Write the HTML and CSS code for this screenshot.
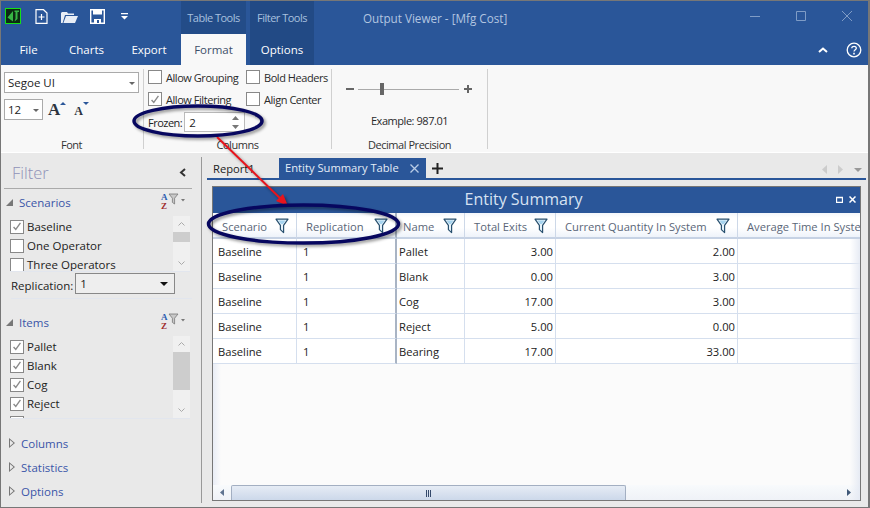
FILE: index.html
```html
<!DOCTYPE html>
<html lang="en">
<head>
    <meta charset="UTF-8">
    <title>Output Viewer - [Mfg Cost]</title>
    <link rel="stylesheet" href="styles.css">
</head>
<body>
    <svg class="defs" width="0" height="0">
        <symbol id="funnel" viewBox="0 0 14 16">
            <path d="M1 1.200h12L8.600 7.400v7.200L5.400 11.600V7.400z" fill="#e6f3fb" stroke="#28506f" stroke-width="1.200" stroke-linejoin="round"/>
            <path d="M3.500 2.500h7L8 6H6z" fill="#a6d3ee"/>
        </symbol>
        <symbol id="sortfilter" viewBox="0 0 24 16">
            <path d="M8 2h9l-3.400 4.200V12l-2.200-1.600V6.200z" fill="#c9c9c9" stroke="#777" stroke-width=".8"/>
            <path d="M20 7h4l-2 2.400z" fill="#777"/>
        </symbol>
        <symbol id="tick" viewBox="0 0 14 14">
            <path d="M3 7.500l2.600 3L11 2.800" fill="none" stroke="#8a8a8a" stroke-width="1.600"/>
        </symbol>
    </svg>

    <div class="window">
        <div class="titlebar">
            <div class="title-row">
                <div class="qat">
                    <svg class="logo" width="16" height="16" viewBox="0 0 16 16">
                        <rect x=".5" y=".5" width="15" height="15" fill="#0c2a12" stroke="#16e016"/>
                        <path d="M2.500 9.500L8 3v10.500zM9.500 2.500h4.500v1.500h-1.500v7L9.500 13.500l1-3V4h-1z" fill="#37b544"/>
                    </svg>
                    <svg class="qat-icon" width="13" height="15" viewBox="0 0 13 15">
                        <path d="M1 .7h7.500L12 4v10.300H1z" fill="none" stroke="#fff" stroke-width="1.200"/>
                        <path d="M6.500 5v6M3.500 8h6" stroke="#fff" stroke-width="1.200"/>
                    </svg>
                    <svg class="qat-icon open" width="17" height="13" viewBox="0 0 17 13">
                        <path d="M0 13V3l1-1h5l1 1.500h6V5H4L1.600 13z" fill="#e8eef6"/>
                        <path d="M2.400 13L5 6h12l-3 7z" fill="#e8eef6"/>
                    </svg>
                    <svg class="qat-icon save" width="15" height="15" viewBox="0 0 15 15">
                        <path d="M.7.700h13.600v13.600H.7z" fill="none" stroke="#fff" stroke-width="1.400"/>
                        <path d="M3 1h9v4.500H3zM4 10h7v5H4z" fill="#fff"/>
                        <path d="M7 11h2v3H7z" fill="#2a5699"/>
                    </svg>
                    <svg class="qat-icon more" width="7" height="7" viewBox="0 0 7 7">
                        <path d="M0 0h7v1.200H0zM0 3h7L3.500 6.500z" fill="#fff"/>
                    </svg>
                </div>
                <div class="context table-tools">Table Tools</div>
                <div class="context filter-tools">Filter Tools</div>
                <div class="window-title">Output Viewer - [Mfg Cost]</div>
                <div class="window-controls">
                    <svg width="10" height="10" viewBox="0 0 10 10"><path d="M0 5.500h10" stroke="#7f9cc6"/></svg>
                    <svg width="10" height="10" viewBox="0 0 10 10"><path d="M.5.500h9v9h-9z" fill="none" stroke="#7f9cc6"/></svg>
                    <svg width="10" height="10" viewBox="0 0 10 10"><path d="M0 0l10 10M10 0L0 10" stroke="#7f9cc6"/></svg>
                </div>
            </div>
            <div class="tab-row">
                <div class="tab tab-file">File</div>
                <div class="tab tab-charts">Charts</div>
                <div class="tab tab-export">Export</div>
                <div class="tab tab-format">Format</div>
                <div class="tab tab-options">Options</div>
                <div class="tab-right">
                    <svg width="10" height="6" viewBox="0 0 10 6"><path d="M1 5l4-3.500L9 5" fill="none" stroke="#fff" stroke-width="2"/></svg>
                    <svg width="16" height="16" viewBox="0 0 16 16">
                        <circle cx="8" cy="8" r="6.800" fill="none" stroke="#fff" stroke-width="1.300"/>
                        <path d="M5.800 6.200C5.800 3.600 10.300 3.700 10.300 6.200 10.300 7.700 8 7.800 8 9.600" fill="none" stroke="#fff" stroke-width="1.300"/>
                        <path d="M7.200 10.800h1.600v1.600H7.200z" fill="#fff"/>
                    </svg>
                </div>
            </div>
        </div>

        <div class="ribbon">
            <div class="group group-font">
                <div class="group-body">
                    <div class="combo combo-font">Segoe UI<i class="caret"></i></div>
                    <div class="font-size-row">
                        <div class="combo combo-size">12<i class="caret"></i></div>
                        <span class="grow-a">A</span><i class="up"></i>
                        <span class="shrink-a">A</span><i class="down"></i>
                    </div>
                </div>
                <div class="group-label">Font</div>
            </div>
            <div class="group group-columns">
                <div class="group-body">
                    <div class="check-grid">
                        <label class="check"><i class="box"></i>Allow Grouping</label>
                        <label class="check"><i class="box"></i>Bold Headers</label>
                        <label class="check"><i class="box"><svg width="13" height="13"><use href="#tick"/></svg></i>Allow Filtering</label>
                        <label class="check"><i class="box"></i>Align Center</label>
                    </div>
                    <div class="frozen-row">
                        <span>Frozen:</span>
                        <div class="spin">2
                            <svg width="7" height="13" viewBox="0 0 7 13"><path d="M0 4l3.500-4L7 4zM0 9h7l-3.500 4z" fill="#777"/></svg>
                        </div>
                    </div>
                </div>
                <div class="group-label">Columns</div>
            </div>
            <div class="group group-decimal">
                <div class="group-body">
                    <div class="slider">
                        <i class="minus"></i>
                        <div class="track"><i class="thumb"></i></div>
                        <svg width="8" height="8" viewBox="0 0 8 8"><path d="M0 3h8v2H0zM3 0h2v8H3z" fill="#666"/></svg>
                    </div>
                    <div class="example">Example: 987.01</div>
                </div>
                <div class="group-label">Decimal Precision</div>
            </div>
        </div>

        <div class="workspace">
            <aside class="sidebar">
                <div class="filter-head">
                    <span class="filter-title">Filter</span>
                    <svg width="7" height="9" viewBox="0 0 7 9"><path d="M6 1L2 4.500 6 8" fill="none" stroke="#333" stroke-width="2"/></svg>
                </div>

                <div class="section-head">
                    <i class="tri-open"></i><span>Scenarios</span>
                    <div class="sort-icon"><b>A</b><b class="z">Z</b><svg width="24" height="16"><use href="#sortfilter"/></svg></div>
                </div>
                <div class="list list-scenarios">
                    <div class="list-items">
                        <label class="item"><i class="box"><svg width="13" height="13"><use href="#tick"/></svg></i>Baseline</label>
                        <label class="item"><i class="box"></i>One Operator</label>
                        <label class="item"><i class="box"></i>Three Operators</label>
                    </div>
                    <div class="vscroll">
                        <svg width="7" height="4" viewBox="0 0 7 4"><path d="M.5 3.500L3.500.5l3 3" fill="none" stroke="#aaa"/></svg>
                        <i class="vthumb"></i>
                        <svg class="vdown" width="7" height="4" viewBox="0 0 7 4"><path d="M.5.500l3 3 3-3" fill="none" stroke="#aaa"/></svg>
                    </div>
                </div>
                <div class="replication">
                    <span>Replication:</span>
                    <div class="rep-select">1<i class="rep-caret"></i></div>
                </div>

                <div class="section-head section-items">
                    <i class="tri-open"></i><span>Items</span>
                    <div class="sort-icon"><b>A</b><b class="z">Z</b><svg width="24" height="16"><use href="#sortfilter"/></svg></div>
                </div>
                <div class="list list-items-box">
                    <div class="list-items">
                        <label class="item"><i class="box"><svg width="13" height="13"><use href="#tick"/></svg></i>Pallet</label>
                        <label class="item"><i class="box"><svg width="13" height="13"><use href="#tick"/></svg></i>Blank</label>
                        <label class="item"><i class="box"><svg width="13" height="13"><use href="#tick"/></svg></i>Cog</label>
                        <label class="item"><i class="box"><svg width="13" height="13"><use href="#tick"/></svg></i>Reject</label>
                        <label class="item"><i class="box"></i></label>
                    </div>
                    <div class="vscroll">
                        <svg width="7" height="4" viewBox="0 0 7 4"><path d="M.5 3.500L3.500.5l3 3" fill="none" stroke="#aaa"/></svg>
                        <i class="vthumb vthumb-long"></i>
                        <svg class="vdown" width="7" height="4" viewBox="0 0 7 4"><path d="M.5.500l3 3 3-3" fill="none" stroke="#aaa"/></svg>
                    </div>
                </div>

                <div class="collapsed first"><i class="tri-closed"></i><span>Columns</span></div>
                <div class="collapsed"><i class="tri-closed"></i><span>Statistics</span></div>
                <div class="collapsed"><i class="tri-closed"></i><span>Options</span></div>
            </aside>

            <main class="content">
                <div class="doc-tabs">
                    <div class="doc-tab">Report1</div>
                    <div class="doc-tab active">Entity Summary Table
                        <svg width="9" height="9" viewBox="0 0 9 9"><path d="M.5.500l8 8M8.500.5l-8 8" stroke="#b9cce6" stroke-width="1.300"/></svg>
                    </div>
                    <svg class="doc-add" width="11" height="11" viewBox="0 0 11 11"><path d="M4.500 0h2v11h-2zM0 4.500h11v2H0z" fill="#222"/></svg>
                    <div class="doc-nav">
                        <svg width="5" height="9" viewBox="0 0 5 9"><path d="M5 0v9L0 4.500z" fill="#ccc"/></svg>
                        <svg width="5" height="9" viewBox="0 0 5 9"><path d="M0 0v9l5-4.500z" fill="#ccc"/></svg>
                        <svg width="8" height="4" viewBox="0 0 8 4"><path d="M0 0h8L4 4z" fill="#999"/></svg>
                    </div>
                </div>

                <div class="panel">
                    <div class="panel-title">
                        Entity Summary
                        <div class="panel-buttons">
                            <svg width="7" height="7" viewBox="0 0 7 7"><path d="M.5 1.500h6v5h-6z" fill="none" stroke="#fff" stroke-width="1.300"/></svg>
                            <svg width="7" height="7" viewBox="0 0 7 7"><path d="M.5.500l6 6M6.500.5l-6 6" stroke="#fff" stroke-width="1.500"/></svg>
                        </div>
                    </div>
                    <div class="table-area">
                        <div class="grid">
                            <div class="th">Scenario<svg width="14" height="16"><use href="#funnel"/></svg></div>
                            <div class="th frozen-edge">Replication<svg width="14" height="16"><use href="#funnel"/></svg></div>
                            <div class="th tight">Name<svg width="14" height="16"><use href="#funnel"/></svg></div>
                            <div class="th">Total Exits<svg width="14" height="16"><use href="#funnel"/></svg></div>
                            <div class="th">Current Quantity In System<svg width="14" height="16"><use href="#funnel"/></svg></div>
                            <div class="th">Average Time In System</div>

                            <div class="td">Baseline</div><div class="td rep frozen-edge">1</div><div class="td name">Pallet</div><div class="td num">3.00</div><div class="td num">2.00</div><div class="td"></div>
                            <div class="td">Baseline</div><div class="td rep frozen-edge">1</div><div class="td name">Blank</div><div class="td num">0.00</div><div class="td num">3.00</div><div class="td"></div>
                            <div class="td">Baseline</div><div class="td rep frozen-edge">1</div><div class="td name">Cog</div><div class="td num">17.00</div><div class="td num">3.00</div><div class="td"></div>
                            <div class="td">Baseline</div><div class="td rep frozen-edge">1</div><div class="td name">Reject</div><div class="td num">5.00</div><div class="td num">0.00</div><div class="td"></div>
                            <div class="td">Baseline</div><div class="td rep frozen-edge">1</div><div class="td name">Bearing</div><div class="td num">17.00</div><div class="td num">33.00</div><div class="td"></div>
                        </div>
                        <div class="table-empty"></div>
                        <div class="hscroll">
                            <svg width="4" height="7" viewBox="0 0 4 7"><path d="M4 0v7L0 3.500z" fill="#5f7390"/></svg>
                            <div class="hthumb">
                                <svg width="5" height="7" viewBox="0 0 5 7"><path d="M.5 0v7M2.500 0v7M4.500 0v7" stroke="#34496b"/></svg>
                            </div>
                            <svg class="hright" width="4" height="7" viewBox="0 0 4 7"><path d="M0 0v7l4-3.500z" fill="#3f5878"/></svg>
                        </div>
                    </div>
                </div>
            </main>
        </div>

        <svg class="callouts" width="870" height="508" viewBox="0 0 870 508">
            <path d="M217 137L284 202" stroke="#e8141c" stroke-width="2"/>
            <path d="M288 206L276 201 283 194z" fill="#e8141c"/>
            <ellipse class="oval" cx="198" cy="121" rx="64" ry="15"/>
            <ellipse class="oval" cx="303.500" cy="224" rx="95" ry="19"/>
        </svg>
    </div>
</body>
</html>
```

FILE: styles.css
```css
* {
    box-sizing: border-box;
}
body {
    margin: 0;
    width: 870px;
    height: 508px;
    overflow: hidden;
    background: #fff;
    font-family: "Open Sans", "Noto Sans", Arial, sans-serif;
    font-size: 11.5px;
    color: #222;
}
i {
    font-style: normal;
}
.defs {
    position: absolute;
}
.window {
    position: relative;
    width: 870px;
    height: 508px;
    border: 1px solid #777;
    border-right-width: 2px;
    display: flex;
    flex-direction: column;
    background: #e9e9e9;
    overflow: hidden;
}

/* title bar and ribbon tabs */
.titlebar {
    background: #2a5699;
    height: 64px;
    flex: none;
}
.title-row {
    height: 33px;
    display: flex;
}
.qat {
    width: 180px;
    display: flex;
    align-items: center;
    padding: 0 0 3px 4px;
}
.qat-icon {
    margin-left: 14px;
}
.qat-icon.open {
    margin-left: 13px;
}
.qat-icon.save {
    margin-left: 12px;
}
.qat-icon.more {
    margin-left: 16px;
}
.context {
    width: 65px;
    display: flex;
    align-items: center;
    justify-content: center;
    color: #a8c0df;
    font-size: 11px;
    letter-spacing: -0.5px;
}
.table-tools {
    background: #234c88;
}
.filter-tools {
    width: 64px;
    margin-left: 4px;
    background: #224a85;
}
.window-title {
    margin-left: 49px;
    align-self: center;
    color: #b2c5e0;
    font-size: 11.7px;
    width: 200px;
}
.window-controls {
    margin-left: auto;
    display: flex;
    gap: 36px;
    padding: 10px 16px 0 0;
}
.tab-row {
    height: 31px;
    display: flex;
    align-items: stretch;
    color: #fff;
}
.tab {
    display: flex;
    align-items: center;
    justify-content: center;
    font-size: 11.5px;
}
.tab-file {
    width: 55px;
}
.tab-charts {
    width: 61px;
}
.tab-export {
    width: 64px;
}
.tab-format {
    width: 65px;
    background: #f8f8f8;
    color: #3d4f69;
}
.tab-options {
    width: 64px;
    margin-left: 4px;
    background: #224a85;
}
.tab-right {
    margin-left: auto;
    display: flex;
    align-items: center;
    gap: 18px;
    padding-right: 6px;
}

/* ribbon */
.ribbon {
    height: 88px;
    flex: none;
    background: #f8f8f8;
    border-bottom: 1px solid #fff;
    display: flex;
    padding-top: 4px;
}
.group {
    display: flex;
    flex-direction: column;
    height: 80px;
    border-right: 1px solid #d0d0d0;
    padding-left: 4px;
}
.group-body {
    flex: 1;
}
.group-label {
    text-align: center;
    height: 16px;
    line-height: 16px;
    margin: 0 0 -4px -4px;
    color: #333;
    font-size: 11px;
    letter-spacing: -0.45px;
}
.group-font {
    width: 143px;
    padding-left: 3px;
    padding-top: 3px;
}
.group-columns {
    width: 188px;
}
.group-decimal {
    width: 156px;
}
.combo {
    position: relative;
    background: #fff;
    border: 1px solid #aaa;
    display: flex;
    align-items: center;
    padding-left: 3px;
    height: 21px;
    font-family: "Open Sans", sans-serif;
    font-weight: normal;
    color: #222;
}
.combo-font {
    width: 135px;
}
.combo-size {
    width: 39px;
}
.caret {
    position: absolute;
    right: 3px;
    top: 9px;
    border: 3.500px solid transparent;
    border-top-color: #666;
    border-bottom-width: 0;
}
.font-size-row {
    position: relative;
    display: flex;
    align-items: center;
    margin-top: 6px;
    font-family: "Liberation Serif", serif;
    font-weight: bold;
    color: #2c3440;
}
.grow-a {
    font-size: 17px;
    margin-left: 5px;
}
.shrink-a {
    font-size: 12px;
    margin-left: 8px;
    margin-top: 3px;
}
.up {
    width: 0;
    margin-top: -12px;
    border: 3px solid transparent;
    border-bottom-color: #2a5699;
    border-top-width: 0;
}
.down {
    width: 0;
    margin-top: -12px;
    border: 3px solid transparent;
    border-top-color: #2a5699;
    border-bottom-width: 0;
}
.check-grid {
    display: grid;
    grid-template-columns: 98px auto;
    grid-auto-rows: 22px;
    margin-top: -3px;
}
.check {
    display: flex;
    align-items: center;
    gap: 4px;
    color: #2a2a2a;
    font-size: 11px;
    letter-spacing: -0.45px;
    white-space: nowrap;
}
.box {
    display: inline-flex;
    align-items: center;
    justify-content: center;
    flex: none;
    width: 14px;
    height: 14px;
    background: #fff;
    border: 1px solid #888;
}
.frozen-row {
    display: flex;
    align-items: center;
    gap: 2px;
    margin-top: 2px;
    font-size: 11px;
    letter-spacing: -0.5px;
}
.spin {
    width: 61px;
    height: 20px;
    background: #fff;
    border: 1px solid #bbb;
    display: flex;
    align-items: center;
    justify-content: space-between;
    padding: 0 5px 0 4px;
    font-size: 11.5px;
}
.slider {
    display: flex;
    align-items: center;
    height: 24px;
    margin-top: 8px;
    padding-left: 10px;
}
.minus {
    width: 8px;
    height: 2px;
    background: #666;
}
.track {
    position: relative;
    width: 101px;
    height: 1px;
    background: #aaa;
    margin: 0 5px 0 4px;
}
.thumb {
    position: absolute;
    left: 22px;
    top: -6px;
    width: 4px;
    height: 12px;
    background: #666;
}
.example {
    text-align: center;
    margin: 12px 0 0 -4px;
    font-size: 11px;
    letter-spacing: -0.45px;
    color: #2a2a2a;
}

/* left filter panel */
.workspace {
    flex: 1;
    display: flex;
    min-height: 0;
}
.sidebar {
    width: 201px;
    flex: none;
    height: 346px;
    border-right: 1px solid #999;
    margin-top: 4px;
    padding: 0 9px 0 3px;
}
.filter-head {
    display: flex;
    align-items: center;
    justify-content: space-between;
    height: 32px;
    padding: 0 6px 0 8px;
    border-bottom: 1px solid #aaa;
}
.filter-title {
    font-size: 16.500px;
    color: #8f92b8;
    font-weight: 300;
}
.section-head {
    position: relative;
    display: flex;
    align-items: center;
    height: 27px;
    color: #3a55a8;
    font-size: 11.5px;
    padding-left: 2px;
}
.section-items {
    margin-top: 10px;
}
.tri-open {
    width: 0;
    height: 0;
    margin-right: 6px;
    border-bottom: 7px solid #777;
    border-left: 7px solid transparent;
}
.sort-icon {
    position: absolute;
    left: 157px;
    top: 4px;
    width: 24px;
    height: 20px;
    font-family: "Liberation Serif", serif;
    font-size: 9px;
    line-height: 9px;
    color: #2a5cb0;
}
.sort-icon b {
    position: absolute;
    left: 0;
    top: 0;
}
.sort-icon .z {
    top: 9px;
    color: #a02d2d;
}
.sort-icon svg {
    position: absolute;
    left: 0;
    top: -1px;
}
.list {
    position: relative;
    margin-left: 6px;
    overflow: hidden;
    display: flex;
    justify-content: space-between;
    border-bottom: 1px solid #e2e6ee;
}
.list-scenarios {
    height: 56px;
    width: 180px;
}
.list-items-box {
    height: 83px;
    width: 180px;
}
.list-items {
    padding-top: 1px;
}
.item {
    display: flex;
    align-items: center;
    gap: 3px;
    height: 19px;
    white-space: nowrap;
    color: #222;
}
.vscroll {
    position: relative;
    width: 17px;
    background: #f0f0f0;
    display: flex;
    flex-direction: column;
    align-items: center;
    padding-top: 6px;
}
.vthumb {
    width: 17px;
    height: 10px;
    margin-top: 6px;
    background: #cdcdcd;
}
.vthumb-long {
    height: 38px;
}
.vdown {
    margin-top: auto;
    margin-bottom: 6px;
}
.replication {
    display: flex;
    align-items: center;
    gap: 2px;
    height: 27px;
    margin-left: 7px;
    width: 181px;
    border-bottom: 1px solid #e2e6ee;
}
.rep-select {
    position: relative;
    width: 100px;
    height: 21px;
    margin-top: -3px;
    border: 1px solid #888;
    background: #eee;
    padding-left: 4px;
    line-height: 19px;
}
.rep-caret {
    position: absolute;
    right: 6px;
    top: 8px;
    border: 4px solid transparent;
    border-top-color: #111;
    border-bottom-width: 0;
}
.collapsed {
    display: flex;
    align-items: center;
    height: 24px;
    color: #3a55a8;
    gap: 6px;
    padding-left: 5px;
}
.collapsed.first {
    margin-top: 12px;
}
.tri-closed {
    width: 6px;
    height: 10px;
    background: #777;
    clip-path: polygon(0 0, 100% 50%, 0 100%, 0 0, 1px 2px, 1px 8px, 4.500px 5px, 1px 2px);
}

/* report area */
.content {
    flex: 1;
    min-width: 0;
    padding: 5px 0 0 5px;
}
.doc-tabs {
    position: relative;
    display: flex;
    align-items: flex-end;
    height: 22px;
    border-bottom: 2px solid #2a5699;
    width: 659px;
    font-size: 11.2px;
}
.doc-tab {
    height: 20px;
    padding-left: 6px;
    width: 72px;
    line-height: 22px;
}
.doc-tab.active {
    width: 147px;
    background: #2a5699;
    color: #e4ecf6;
    display: flex;
    align-items: center;
    justify-content: space-between;
    padding-right: 7px;
}
.doc-add {
    margin: 0 0 4px 6px;
}
.doc-nav {
    margin-left: auto;
    display: flex;
    align-items: center;
    gap: 11px;
    margin-bottom: 4px;
    padding-right: 4px;
}
.panel {
    margin: 6px 0 0 5px;
    width: 649px;
    height: 315px;
    border: 1px solid #777;
    display: flex;
    flex-direction: column;
}
.panel-title {
    position: relative;
    height: 26px;
    flex: none;
    background: #2a5699;
    color: #d7e2f2;
    font-size: 16px;
    line-height: 25px;
    text-align: center;
    padding-right: 26px;
}
.panel-buttons {
    position: absolute;
    right: 4px;
    top: 9px;
    display: flex;
    gap: 6px;
}
.table-area {
    position: relative;
    flex: 1;
    min-height: 0;
    display: flex;
    flex-direction: column;
    background: #fbfbfb;
    overflow: hidden;
    font-size: 11.2px;
}
.table-area::after {
    content: "";
    position: absolute;
    top: 26px;
    bottom: 0;
    right: 0;
    width: 10px;
    background: linear-gradient(to right, rgba(235, 238, 245, 0), rgba(228, 233, 243, 0.9));
}
.grid {
    display: grid;
    grid-template-columns: 84px 100px 68px 91px 182px 180px;
    grid-template-rows: 26px;
    grid-auto-rows: 25px;
    flex: none;
    white-space: nowrap;
}
.th {
    display: flex;
    align-items: center;
    justify-content: space-between;
    padding: 2px 7px 0 9px;
    background: linear-gradient(#f3f6fb, #fff 20%, #fff 60%, #eef3fa);
    border-right: 1px solid #cdd8e8;
    border-bottom: 2px solid #c6d2e4;
    color: #5a6678;
}
.th.tight {
    padding-left: 6px;
}
.th.frozen-edge,
.td.frozen-edge {
    border-right: 2px solid #a9b4c4;
}
.td {
    background: #fff;
    padding: 0 5px;
    line-height: 26px;
    border-right: 1px solid #d5dfee;
    border-bottom: 1px solid #d5dfee;
}
.td.rep {
    padding-left: 6px;
}
.td.name {
    padding-left: 2px;
}
.td.num {
    text-align: right;
    padding-right: 2px;
}
.table-empty {
    flex: 1;
    background: linear-gradient(to right, #e9edf6, #fbfbfb 8px);
}
.hscroll {
    position: relative;
    height: 15px;
    flex: none;
    display: flex;
    align-items: center;
    padding-left: 7px;
    background: linear-gradient(#f8fafc, #eff2f7);
}
.hthumb {
    width: 395px;
    height: 15px;
    margin-left: 7px;
    background: linear-gradient(#e6ecf5, #ccd8ea);
    border: 1px solid #a3afc2;
    border-bottom: 0;
    border-radius: 2px 2px 0 0;
    display: flex;
    align-items: center;
    justify-content: center;
}
.hright {
    margin-left: auto;
    margin-right: 9px;
}

/* hand drawn annotations on top of the screenshot */
.callouts {
    position: absolute;
    left: -1px;
    top: -1px;
    pointer-events: none;
    filter: drop-shadow(2px 2px 1.500px rgba(0, 0, 0, 0.4));
}
.oval {
    fill: none;
    stroke: #07075f;
    stroke-width: 3.500;
}
```
